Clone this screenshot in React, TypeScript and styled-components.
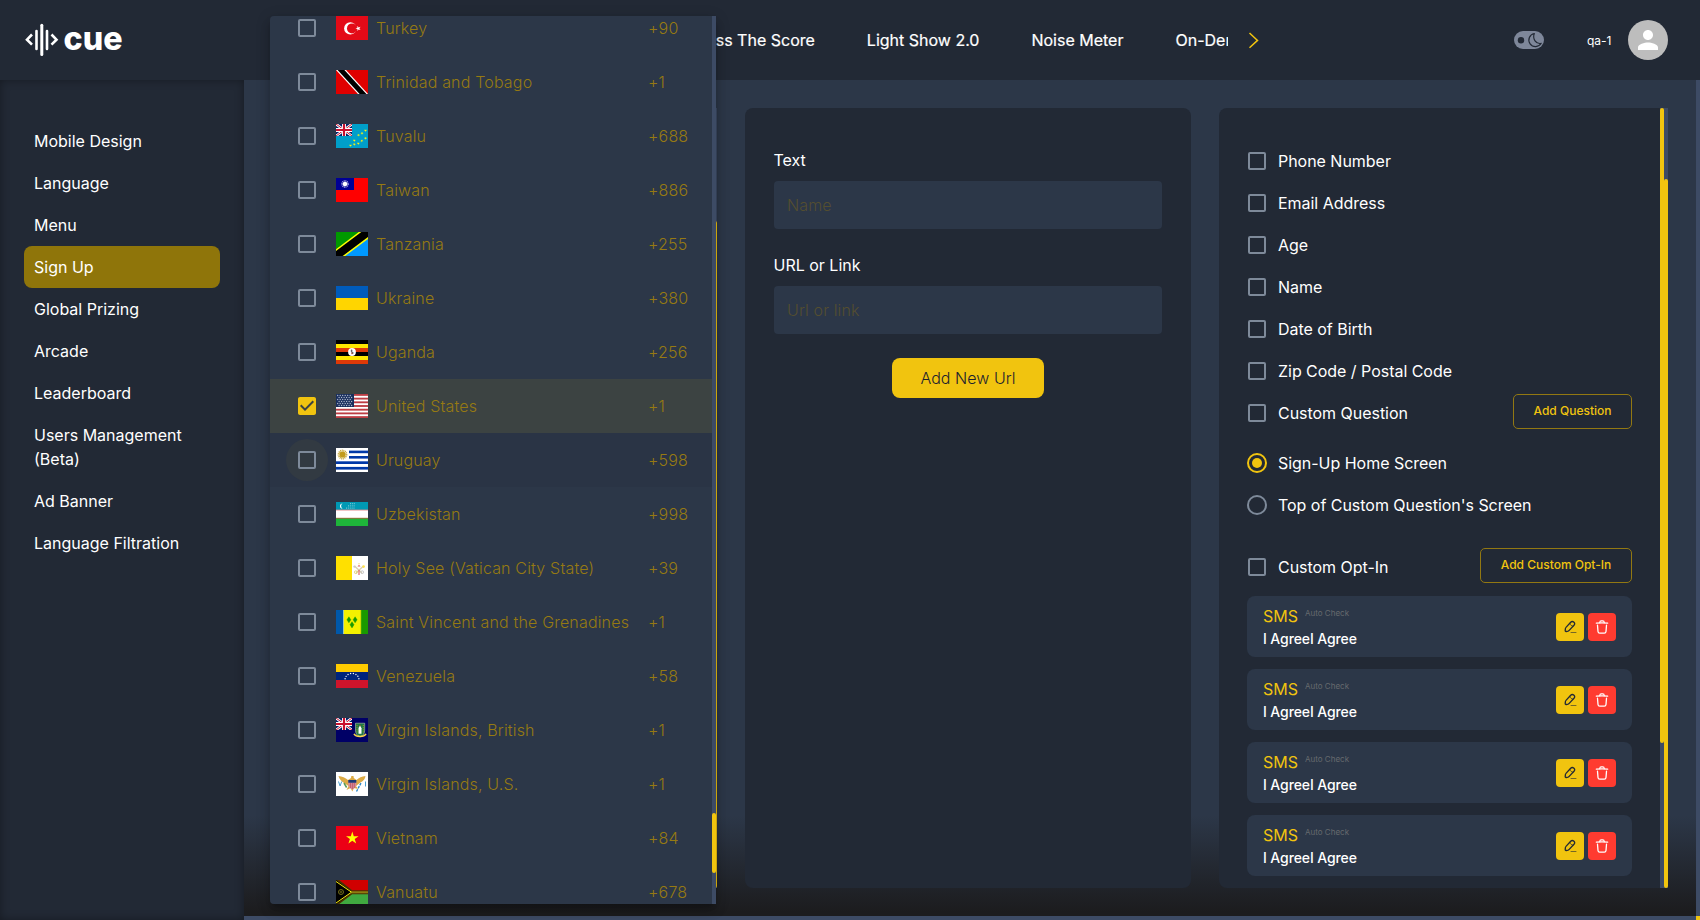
import React from "react";
import styled, { createGlobalStyle, css } from "styled-components";

const c = {
  bar: "#222935",
  panel: "#222935",
  surface: "#2c3748",
  track: "#3d4b65",
  accent: "#f1c40f",
  dim: "#967a12",
  text: "#ffffff",
  outline: "#7e8a9a",
};

const Global = createGlobalStyle`
  *, *::before, *::after { box-sizing: border-box; }
  body { margin: 0; background: ${c.track}; font-family: Inter, "Liberation Sans", sans-serif; font-size: 16px; color: ${c.text}; overflow: hidden; }
  button, input { font: inherit; }
`;

const Page = styled.div`
  width: 1700px;
  height: 920px;
  display: flex;
  flex-direction: column;
  overflow: hidden;
`;

/* ---------- header ---------- */
const Header = styled.header`
  height: 80px;
  flex: none;
  display: flex;
  align-items: center;
  background: ${c.bar};
  padding: 0 32px 0 25px;
`;
const Logo = styled.svg`
  width: 100px;
  height: 40px;
  flex: none;
`;
const Nav = styled.nav`
  width: 543px;
  margin-left: 560px;
  display: flex;
  gap: 52px;
  overflow: hidden;
  white-space: nowrap;
  justify-content: flex-start;
`;
const NavLink = styled.a`
  flex: none;
  line-height: 24px;
  -webkit-text-stroke: 0.2px currentColor;
`;
const NavChevron = styled.svg`
  width: 12px;
  height: 18px;
  margin-left: 20px;
`;
const Toggle = styled.svg`
  width: 30px;
  height: 18px;
  margin-left: auto;
`;
const User = styled.span`
  width: 41px;
  margin-left: 43px;
  font-size: 12px;
  line-height: 18px;
  padding-top: 2px;
`;
const Avatar = styled.div`
  width: 40px;
  height: 40px;
  border-radius: 50%;
  background: #bdbdbd;
  display: flex;
  align-items: center;
  justify-content: center;
`;

/* ---------- shell ---------- */
const Shell = styled.div`
  flex: 1;
  min-height: 0;
  display: flex;
`;
const Sidebar = styled.aside`
  width: 244px;
  flex: none;
  background: ${c.bar};
  box-shadow: inset 0 0 10px rgba(0, 0, 0, 0.35);
  padding: 40px 24px 0;
`;
const SideItem = styled.a<{ $active?: boolean }>`
  display: block;
  padding: 9px 10px;
  line-height: 24px;
  border-radius: 8px;
  background: ${(p) => (p.$active ? "#8f750a" : "transparent")};
`;
const Main = styled.main`
  flex: 1;
  min-width: 0;
  display: flex;
  flex-direction: column;
`;
const Viewport = styled.div`
  flex: 1;
  min-height: 0;
  display: flex;
`;
const Content = styled.div`
  flex: 1;
  min-width: 0;
  display: flex;
  padding: 28px 28px 28px 26px;
  background: linear-gradient(180deg, ${c.surface} 0, ${c.surface} 736px, #1c1c1e 832px);
`;
const Bar = styled.div`
  width: 4px;
  flex: none;
  background: ${c.track};
`;
const Thumb = styled.div<{ $top: number; $h: number }>`
  height: ${(p) => p.$h}px;
  margin-top: ${(p) => p.$top}px;
  border-radius: 2px;
  background: ${c.accent};
`;
const BottomBar = styled.div`
  height: 4px;
  flex: none;
  background: ${c.track};
  display: flex;
  justify-content: flex-end;
`;
const Corner = styled.div`
  width: 4px;
  background: ${c.accent};
`;

/* ---------- panels ---------- */
const PanelBase = css`
  background: ${c.panel};
  border-radius: 8px;
  height: 780px;
`;
const CountryPanel = styled.section`
  ${PanelBase}
  width: 447px;
  display: flex;
  justify-content: flex-end;
  flex: none;
`;
const UrlPanel = styled.section`
  ${PanelBase}
  width: 446px;
  flex: none;
  margin-left: 28px;
  padding: 40px 28.5px;
  display: flex;
  flex-direction: column;
`;
const FieldLabel = styled.label`
  line-height: 24px;
  margin-bottom: 9px;
`;
const Field = styled.input`
  height: 48px;
  width: 388.5px;
  border: 0;
  border-radius: 4px;
  background: ${c.surface};
  padding: 0 14px 1px 13.5px;
  font-weight: 300;
  letter-spacing: 0.15px;
  margin-bottom: 24px;
  color: ${c.accent};
  &::placeholder {
    color: #544e30;
    opacity: 1;
  }
`;
const AddUrl = styled.button`
  width: 152px;
  height: 40px;
  align-self: center;
  border: 0;
  border-radius: 8px;
  background: ${c.accent};
  color: #1c222e;
  font-weight: 300;
  letter-spacing: 0.06px;
`;
const FormPanel = styled.section`
  ${PanelBase}
  flex: 1;
  margin-left: 28px;
  border-radius: 8px 0 0 8px;
  display: flex;
`;
const FormBody = styled.div`
  flex: 1;
  padding: 32px 28px 0;
  overflow: hidden;
`;
const CheckRow = styled.div<{ $gap?: number }>`
  height: 42px;
  margin-top: ${(p) => p.$gap ?? 0}px;
  display: flex;
  align-items: center;
  padding-left: 1px;
`;
const CheckLabel = styled.span`
  margin-left: 12px;
  flex: 1;
  line-height: 24px;
  letter-spacing: -0.03px;
`;
const Box = styled.span`
  width: 18px;
  height: 18px;
  flex: none;
  border: 2px solid ${c.outline};
  border-radius: 2px;
`;
const Radio = styled.span<{ $on?: boolean }>`
  width: 20px;
  height: 20px;
  flex: none;
  margin: 0 -1px;
  border-radius: 50%;
  border: 2px solid ${(p) => (p.$on ? c.accent : c.outline)};
  display: flex;
  align-items: center;
  justify-content: center;
  &::after {
    content: "";
    width: 10px;
    height: 10px;
    border-radius: 50%;
    background: ${(p) => (p.$on ? c.accent : "transparent")};
  }
`;
const OutlineButton = styled.button<{ $w: number }>`
  width: ${(p) => p.$w}px;
  height: 35px;
  flex: none;
  margin-top: -3px;
  padding: 0 0 2px;
  border: 1px solid #927812;
  border-radius: 5px;
  background: transparent;
  color: ${c.accent};
  font-size: 12px;
  font-weight: 500;
`;
const OptCards = styled.div`
  display: flex;
  flex-direction: column;
  gap: 12px;
  margin-top: 8px;
`;
const OptCard = styled.article`
  height: 61px;
  border-radius: 8px;
  background: ${c.surface};
  display: flex;
  align-items: center;
  gap: 4px;
  padding: 0 16px;
`;
const OptText = styled.div`
  flex: 1;
  padding-top: 2px;
`;
const OptTop = styled.div`
  display: flex;
  gap: 7px;
  color: ${c.accent};
  line-height: 22px;
  height: 23px;
`;
const OptTag = styled.small`
  font-size: 8px;
  line-height: 16px;
  color: #666a6e;
`;
const OptDesc = styled.div`
  font-size: 14px;
  font-weight: 500;
  letter-spacing: -0.1px;
  line-height: 22px;
`;
const IconButton = styled.button<{ $danger?: boolean }>`
  width: 28px;
  height: 28px;
  border: 0;
  padding: 0;
  border-radius: 4px;
  display: flex;
  align-items: center;
  justify-content: center;
  background: ${(p) => (p.$danger ? "#ff3b30" : c.accent)};
  color: ${(p) => (p.$danger ? "#fff" : c.bar)};
`;

/* ---------- country menu (popover) ---------- */
const Menu = styled.div`
  position: absolute;
  left: 270px;
  top: 16px;
  width: 446px;
  height: 888px;
  display: flex;
  border-radius: 4px 0 0 4px;
  overflow: hidden;
  background: ${c.surface};
`;
const MenuShadow = styled.div`
  position: absolute;
  left: 270px;
  top: 16px;
  width: 446px;
  height: 888px;
  border-radius: 4px;
  box-shadow: 0 5px 5px -3px rgba(0, 0, 0, 0.2), 0 8px 10px 1px rgba(0, 0, 0, 0.14),
    0 3px 14px 2px rgba(0, 0, 0, 0.12);
`;
const MenuList = styled.ul`
  flex: 1;
  list-style: none;
  padding: 0;
  margin: -15px 0 0;
`;
const MenuItem = styled.li<{ $selected?: boolean; $hover?: boolean }>`
  height: 54px;
  display: flex;
  align-items: center;
  padding-left: 16px;
  color: ${c.dim};
  font-weight: 300;
  letter-spacing: 0.17px;
  background: ${(p) => (p.$selected ? "#3c4342" : p.$hover ? "#2a3445" : "transparent")};
`;
const CheckHalo = styled.span<{ $hover?: boolean }>`
  width: 42px;
  height: 42px;
  border-radius: 50%;
  display: flex;
  align-items: center;
  justify-content: center;
  background: ${(p) => (p.$hover ? "#323a42" : "transparent")};
`;
const FlagSvg = styled.svg`
  width: 32px;
  height: 24px;
  margin: 0 8px;
  display: block;
`;
const Country = styled.span`
  width: 272px;
  white-space: nowrap;
`;

const pts = (cx: number, cy: number, r: number, rot = -90) =>
  Array.from({ length: 10 }, (_, i) => {
    const a = ((rot + i * 36) * Math.PI) / 180;
    const q = i % 2 ? r * 0.382 : r;
    return `${(cx + q * Math.cos(a)).toFixed(2)},${(cy + q * Math.sin(a)).toFixed(2)}`;
  }).join(" ");

const Star = ({ x, y, r, fill, rot }: { x: number; y: number; r: number; fill: string; rot?: number }) => (
  <polygon points={pts(x, y, r, rot)} fill={fill} />
);

const Jack = () => (
  <svg x="0" y="0" width="16" height="12" viewBox="0 0 16 12">
    <rect width="16" height="12" fill="#012169" />
    <path d="M0 0 16 12M16 0 0 12" stroke="#fff" strokeWidth="2.6" />
    <path d="M0 0 16 12M16 0 0 12" stroke="#c8102e" strokeWidth="1" />
    <path d="M8 0V12M0 6H16" stroke="#fff" strokeWidth="4" />
    <path d="M8 0V12M0 6H16" stroke="#c8102e" strokeWidth="2.2" />
  </svg>
);

const flags: Record<string, React.ReactNode> = {
  tr: (
    <>
      <rect width="32" height="24" fill="#e30a17" />
      <circle cx="14.3" cy="12.4" r="6.2" fill="#fff" />
      <circle cx="16" cy="12.4" r="5" fill="#e30a17" />
      <Star x={22.3} y={12.4} r={2.8} fill="#fff" rot={180} />
    </>
  ),
  tt: (
    <>
      <rect width="32" height="24" fill="#e00000" />
      <path d="M0 0H10L32 24H22Z" fill="#fff" />
      <path d="M1.6 0H8.4L30.4 24H23.6Z" fill="#000" />
    </>
  ),
  tv: (
    <>
      <rect width="32" height="24" fill="#009fca" />
      <Jack />
      {[[14.5, 21.5], [18.3, 20.3], [18.3, 16.5], [22.3, 19.5], [22.5, 11], [25.8, 16.8], [26, 9.3], [29.5, 14.2], [29.5, 6.5]].map(
        ([x, y]) => (
          <Star key={`${x}-${y}`} x={x} y={y} r={1.6} fill="#fff40d" rot={90} />
        )
      )}
    </>
  ),
  tw: (
    <>
      <rect width="32" height="24" fill="#f00" />
      <rect width="18" height="12" fill="#000095" />
      <circle cx="9" cy="6" r="3.1" fill="none" stroke="#fff" strokeOpacity=".75" strokeWidth="1.3" strokeDasharray="1 .62" />
      <circle cx="9" cy="6" r="2.3" fill="#fff" />
    </>
  ),
  tz: (
    <>
      <rect width="32" height="24" fill="#090" />
      <path d="M32 0V24H0Z" fill="#09f" />
      <path d="M-4 27 36 -3" stroke="#ff0" strokeWidth="11" />
      <path d="M-4 27 36 -3" stroke="#000" strokeWidth="8" />
    </>
  ),
  ua: (
    <>
      <rect width="32" height="12" fill="#005bbb" />
      <rect y="12" width="32" height="12" fill="#ffd500" />
    </>
  ),
  ug: (
    <>
      {["#000", "#ffe700", "#de3908", "#000", "#ffe700", "#de3908"].map((f, i) => (
        <rect key={i} y={i * 4} width="32" height="4" fill={f} />
      ))}
      <circle cx="16" cy="12" r="3.9" fill="#fff" />
      <path d="M15 9.600l1.400.2-.1 2 1.500 1-.8 1.300-1.600-.4.1-1.400-.8-1z" fill="#666" />
      <path d="M15.400 12.600l1 .4-.4 2z" fill="#de3908" />
    </>
  ),
  us: (
    <>
      <rect width="32" height="24" fill="#fff" />
      {[0, 1, 2, 3, 4, 5, 6].map((i) => (
        <rect key={i} y={(i * 48) / 13} width="32" height={24 / 13} fill="#bd3d44" />
      ))}
      <rect width="18" height="13" fill="#192f5d" />
      {[1.5, 3.5, 5.5, 7.5, 9.5, 11.5].map((y, j) =>
        [1.5, 4, 6.5, 9, 11.5, 14].map((x) => (
          <circle key={`${x}-${y}`} cx={x + (j % 2 ? 1.6 : 0.2)} cy={y} r=".65" fill="#b4bccf" />
        ))
      )}
    </>
  ),
  uy: (
    <>
      <rect width="32" height="24" fill="#fff" />
      <rect x="13" y="2.6" width="19" height="2.6" fill="#0038a8" />
      <rect x="13" y="8" width="19" height="2.6" fill="#0038a8" />
      <rect y="13.3" width="32" height="2.7" fill="#0038a8" />
      <rect y="18.9" width="32" height="2.7" fill="#0038a8" />
      <circle cx="6.5" cy="6.5" r="4" fill="none" stroke="#c9a93c" strokeWidth="1.8" strokeDasharray="1 .6" />
      <circle cx="6.5" cy="6.5" r="3.1" fill="#c29b1c" />
    </>
  ),
  uz: (
    <>
      <rect width="32" height="8" fill="#0099b5" />
      <rect y="8" width="32" height="8" fill="#fff" />
      <rect y="16" width="32" height="8" fill="#1eb53a" />
      <rect y="7.600" width="32" height=".9" fill="#e58b90" />
      <rect y="15.800" width="32" height=".9" fill="#a2663a" />
      <path d="M6.600 1.400a2.600 2.600 0 1 0 0 5.200 3 3 0 0 1 0-5.200z" fill="#fff" />
      <path d="M14 1.700h5M12 3.900h7M10 6.100h9" stroke="#d6eff4" strokeWidth=".8" strokeDasharray=".8 1.100" />
    </>
  ),
  va: (
    <>
      <rect width="16" height="24" fill="#ffe000" />
      <rect x="16" width="16" height="24" fill="#fff" />
      <path d="M18.500 10l7.500 7M27.500 10l-7.500 7" stroke="#d9cfae" strokeWidth="1.300" />
      <circle cx="27.600" cy="10.600" r="1.300" fill="#ffe34d" />
      <circle cx="18.500" cy="10.600" r="1.200" fill="#ccc" />
      <circle cx="19.800" cy="16.200" r="1.400" fill="none" stroke="#e3cf62" strokeWidth=".8" />
      <circle cx="26.200" cy="16.200" r="1.400" fill="none" stroke="#bbb" strokeWidth=".8" />
      <path d="M21.500 10.500q1.500-3 3 0zM22.400 14h1.200v5h-1.200z" fill="#e06a6a" />
      <circle cx="23" cy="7.700" r=".7" fill="#f1e18a" />
    </>
  ),
  vc: (
    <>
      <rect width="8" height="24" fill="#0058aa" />
      <rect x="7" width="18" height="24" fill="#f4f100" />
      <rect x="7" width="1" height="24" fill="#9fc9b0" />
      <rect x="25" width="7" height="24" fill="#199a00" />
      <rect x="24.400" width=".8" height="24" fill="#b9cf00" />
      <path d="M12.900 6.800l2 3-2 3-2-3zM19.100 6.800l2 3-2 3-2-3zM16 11.700l2 3-2 3.200-2-3.200z" fill="#199a00" stroke="#199a00" strokeWidth=".4" />
    </>
  ),
  ve: (
    <>
      <rect width="32" height="8" fill="#fc0" />
      <rect y="8" width="32" height="8" fill="#00247d" />
      <rect y="16" width="32" height="8" fill="#cf142b" />
      {[0, 1, 2, 3, 4, 5, 6, 7].map((i) => {
        const a = ((190 + i * 22.85) * Math.PI) / 180;
        return <circle key={i} cx={16 + 7 * Math.cos(a)} cy={15.8 + 6.4 * Math.sin(a)} r=".7" fill="#fff" />;
      })}
    </>
  ),
  vg: (
    <>
      <rect width="32" height="24" fill="#006" />
      <Jack />
      <path d="M19.500 5.200h9.200v7q0 5-4.600 6.600-4.600-1.600-4.600-6.600z" fill="#1e7a45" stroke="#d8d8c0" strokeWidth=".5" />
      <path d="M24 7.200l1.500 3v5.600h-3V10z" fill="#fff" />
      <circle cx="24" cy="7.600" r=".8" fill="#8a5a2a" />
      <path d="M21 7v8M27.300 7v8" stroke="#d6a520" strokeWidth=".8" strokeDasharray=".9 1" />
      <path d="M18 15.800q1.500 2.500 6 2.700 4.500-.2 6-2.700" fill="none" stroke="#ffd94a" strokeWidth="1.600" />
    </>
  ),
  vi: (
    <>
      <rect width="32" height="24" fill="#fff" />
      <path d="M2.500 4Q8 4.500 12 8L15 6l.3-2h2.200l.3 2L20.500 8Q24 4.500 29.500 4 29 8 24.500 10.500L20 14l2 3-4-1-1.700 3.500L14.600 16 10.500 18l2-4L8 11Q3.500 8 2.500 4z" fill="#dcab45" />
      <path d="M12.300 8.500h8v5q-1 3-4 4-3-1-4-4z" fill="#d58b99" />
      <path d="M12.300 8h8v2.800h-8z" fill="#1b3a78" />
      <path d="M14.500 11v5M16.400 11v6M18.300 11v5" stroke="#b5404f" strokeWidth=".6" />
      <path d="M8 11l2.600 4.500" stroke="#5b9a55" strokeWidth="1.500" />
      <path d="M20.500 19.500L25 11" stroke="#2a86c8" strokeWidth="1.400" strokeDasharray="2.500 1" />
      <path d="M2.500 9.500l1.600 4.500 1.600-4.500M29.500 9.500v5" fill="none" stroke="#4a9fd0" strokeWidth="1" />
    </>
  ),
  vn: (
    <>
      <rect width="32" height="24" fill="#ec0015" />
      <Star x={16.3} y={12.2} r={6.6} fill="#ff0" />
    </>
  ),
  vu: (
    <>
      <rect width="32" height="12" fill="#d00000" />
      <rect y="12" width="32" height="12" fill="#40a940" />
      <path d="M0 0L15.500 12.200 0 24M15 12.200H32" fill="none" stroke="#4a3300" strokeWidth="4" />
      <path d="M15 12.300H32" stroke="#8f7c10" strokeWidth="2" />
      <path d="M0 0L16 12.200 0 24.400z" fill="#000" />
      <path d="M0 1.500L15.500 12.200 0 23" fill="none" stroke="#fdf20d" strokeWidth="1" />
      <circle cx="5" cy="12" r="2.500" fill="none" stroke="#8f8a20" strokeWidth=".8" />
      <circle cx="5" cy="12" r=".9" fill="none" stroke="#8f8a20" strokeWidth=".6" />
    </>
  ),
};

const countries: [string, string, string][] = [
  ["tr", "Turkey", "+90"],
  ["tt", "Trinidad and Tobago", "+1"],
  ["tv", "Tuvalu", "+688"],
  ["tw", "Taiwan", "+886"],
  ["tz", "Tanzania", "+255"],
  ["ua", "Ukraine", "+380"],
  ["ug", "Uganda", "+256"],
  ["us", "United States", "+1"],
  ["uy", "Uruguay", "+598"],
  ["uz", "Uzbekistan", "+998"],
  ["va", "Holy See (Vatican City State)", "+39"],
  ["vc", "Saint Vincent and the Grenadines", "+1"],
  ["ve", "Venezuela", "+58"],
  ["vg", "Virgin Islands, British", "+1"],
  ["vi", "Virgin Islands, U.S.", "+1"],
  ["vn", "Vietnam", "+84"],
  ["vu", "Vanuatu", "+678"],
];

const sideItems = [
  "Mobile Design",
  "Language",
  "Menu",
  "Sign Up",
  "Global Prizing",
  "Arcade",
  "Leaderboard",
  "Users Management (Beta)",
  "Ad Banner",
  "Language Filtration",
];

const CheckedBox = () => (
  <svg width="24" height="24" viewBox="0 0 24 24">
    <path
      fill={c.accent}
      d="M19 3H5c-1.110 0-2 .9-2 2v14c0 1.100.89 2 2 2h14c1.110 0 2-.9 2-2V5c0-1.100-.89-2-2-2zm-9 14l-5-5 1.410-1.410L10 14.170l7.590-7.590L19 8l-9 9z"
    />
  </svg>
);

const PencilIcon = () => (
  <svg width="14" height="14" viewBox="0 0 14 14" fill="none" stroke="currentColor" strokeLinecap="round" strokeLinejoin="round">
    <path d="M7.700 2.200L3 7.400c-.3.300-.5.800-.6 1.200l-.2 2c0 .6.400 1 1 .9l1.900-.4c.4-.1.900-.4 1.100-.7l4.800-5.200c.8-.9 1.100-1.800 0-2.900-1.200-1.100-2.500-.9-3.300-.1z" strokeWidth="1.300" />
    <path d="M6.800 3.300c.3 1.600 1.500 2.700 3.200 2.900" strokeWidth="1" opacity=".7" />
    <path d="M8 12.500h5" strokeWidth="1" opacity=".6" />
  </svg>
);

const TrashIcon = () => (
  <svg width="14" height="14" viewBox="0 0 14 14" fill="none" stroke="currentColor" strokeLinecap="round" strokeLinejoin="round">
    <path d="M1.300 3.100Q7 2.500 12.700 3.100" strokeWidth="1.200" />
    <path d="M4.700 2.700c.1-1.500.5-1.800 1.500-1.800h1.600c1 0 1.400.3 1.500 1.800" strokeWidth="1.200" />
    <path d="M2.500 5.200l.5 6.300c.1 1.200.4 1.700 1.700 1.700h4.600c1.300 0 1.600-.5 1.700-1.700l.5-6.300" strokeWidth="1.300" />
  </svg>
);

export default function App() {
  return (
    <Page>
      <Global />
      <Header>
        <Logo viewBox="0 0 100 40">
          <g stroke="#fff" strokeLinecap="round" fill="none" strokeWidth="3">
            <path d="M16.800 5.300V34.500" />
            <path d="M11.500 11V29M22 11V29" strokeWidth="2.600" />
            <path d="M7 14.500L2 19.700l5 5M26.500 14.500l5 5.200-5 5" strokeWidth="2.600" strokeLinecap="butt" />
          </g>
          <text
            x="38.500"
            y="29.500"
            fontFamily="Inter"
            fontWeight="800"
            fontSize="33"
            fill="#fff"
            textLength="59"
            lengthAdjust="spacingAndGlyphs"
          >
            cue
          </text>
        </Logo>
        <Nav>
          <NavLink>Guess The Score</NavLink>
          <NavLink>Light Show 2.0</NavLink>
          <NavLink>Noise Meter</NavLink>
          <NavLink>On-Demand</NavLink>
        </Nav>
        <NavChevron viewBox="0 0 12 18">
          <path d="M1.500 2L9.500 9.400 1.500 16.700" fill="none" stroke={c.accent} strokeWidth="1.500" />
        </NavChevron>
        <Toggle viewBox="0 0 30 18">
          <rect width="30" height="18" rx="9" fill="#7e879a" />
          <circle cx="7" cy="9.200" r="3.200" fill={c.bar} />
          <path d="M20.300 2.500a6.600 6.600 0 1 0 6.900 9.800c-5.200 1.200-9-4.500-6.900-9.800z" fill="none" stroke={c.bar} strokeWidth="1.200" strokeLinejoin="round" />
        </Toggle>
        <User>qa-1</User>
        <Avatar>
          <svg width="30" height="30" viewBox="0 0 24 24" fill="#fff">
            <path d="M12 12c2.210 0 4-1.790 4-4s-1.790-4-4-4-4 1.790-4 4 1.790 4 4 4zm0 2c-2.670 0-8 1.340-8 4v2h16v-2c0-2.660-5.330-4-8-4z" />
          </svg>
        </Avatar>
      </Header>

      <Shell>
        <Sidebar>
          {sideItems.map((s) => (
            <SideItem key={s} $active={s === "Sign Up"}>
              {s}
            </SideItem>
          ))}
        </Sidebar>
        <Main>
          <Viewport>
            <Content>
              <CountryPanel>
                <Bar>
                  <Thumb $top={113} $h={667} />
                </Bar>
              </CountryPanel>
              <UrlPanel>
                <FieldLabel>Text</FieldLabel>
                <Field placeholder="Name" />
                <FieldLabel>URL or Link</FieldLabel>
                <Field placeholder="Url or link" />
                <AddUrl>Add New Url</AddUrl>
              </UrlPanel>
              <FormPanel>
                <FormBody>
                  {["Phone Number", "Email Address", "Age", "Name", "Date of Birth", "Zip Code / Postal Code"].map((t) => (
                    <CheckRow key={t}>
                      <Box />
                      <CheckLabel>{t}</CheckLabel>
                    </CheckRow>
                  ))}
                  <CheckRow>
                    <Box />
                    <CheckLabel>Custom Question</CheckLabel>
                    <OutlineButton $w={119}>Add Question</OutlineButton>
                  </CheckRow>
                  <CheckRow $gap={8}>
                    <Radio $on />
                    <CheckLabel>Sign-Up Home Screen</CheckLabel>
                  </CheckRow>
                  <CheckRow>
                    <Radio />
                    <CheckLabel>Top of Custom Question's Screen</CheckLabel>
                  </CheckRow>
                  <CheckRow $gap={20}>
                    <Box />
                    <CheckLabel>Custom Opt-In</CheckLabel>
                    <OutlineButton $w={152}>Add Custom Opt-In</OutlineButton>
                  </CheckRow>
                  <OptCards>
                    {[0, 1, 2, 3].map((i) => (
                      <OptCard key={i}>
                        <OptText>
                          <OptTop>
                            SMS <OptTag>Auto Check</OptTag>
                          </OptTop>
                          <OptDesc>I AgreeI Agree</OptDesc>
                        </OptText>
                        <IconButton>
                          <PencilIcon />
                        </IconButton>
                        <IconButton $danger>
                          <TrashIcon />
                        </IconButton>
                      </OptCard>
                    ))}
                  </OptCards>
                </FormBody>
                <Bar>
                  <Thumb $top={0} $h={635} />
                </Bar>
                <Bar>
                  <Thumb $top={71} $h={709} />
                </Bar>
              </FormPanel>
            </Content>
            <Bar />
          </Viewport>
          <BottomBar>
            <Corner />
          </BottomBar>
        </Main>
      </Shell>

      <MenuShadow />
      <Menu>
        <MenuList>
          {countries.map(([code, name, dial]) => (
            <MenuItem key={code} $selected={code === "us"} $hover={code === "uy"}>
              <CheckHalo $hover={code === "uy"}>{code === "us" ? <CheckedBox /> : <Box />}</CheckHalo>
              <FlagSvg viewBox="0 0 32 24">{flags[code]}</FlagSvg>
              <Country>{name}</Country>
              <span>{dial}</span>
            </MenuItem>
          ))}
        </MenuList>
        <Bar>
          <Thumb $top={797} $h={60} />
        </Bar>
      </Menu>
    </Page>
  );
}
